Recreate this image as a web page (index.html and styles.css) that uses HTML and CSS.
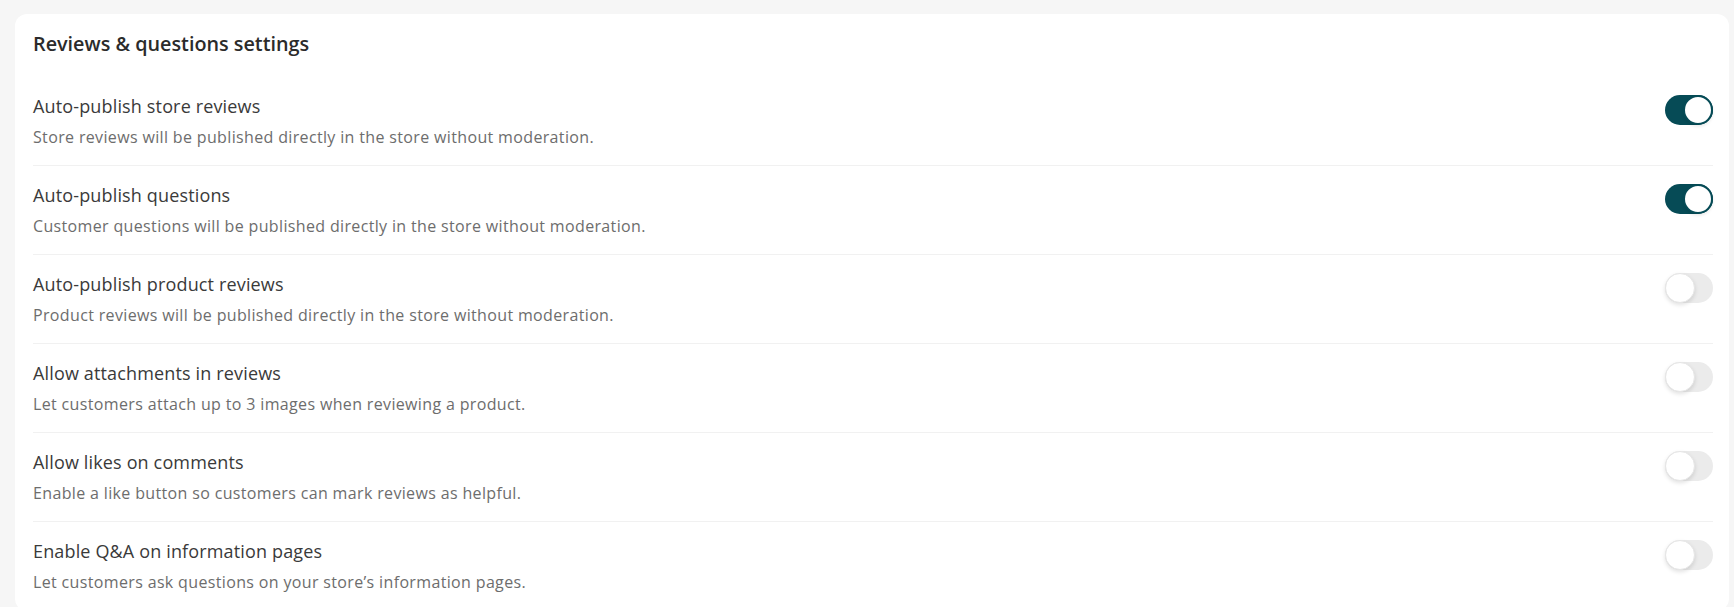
FILE: index.html
```html
<!DOCTYPE html>
<html lang="en">
<head>
<meta charset="utf-8">
<title>Reviews &amp; questions settings</title>
<link rel="stylesheet" href="styles.css">
</head>
<body>
<div class="page">
  <section class="card">
    <h2 class="card-title">Reviews &amp; questions settings</h2>
    <div class="list">
      <div class="row">
        <div class="text">
          <div class="label">Auto-publish store reviews</div>
          <div class="desc">Store reviews will be published directly in the store without moderation.</div>
        </div>
        <span class="toggle on"><span class="knob"></span></span>
      </div>
      <div class="row">
        <div class="text">
          <div class="label">Auto-publish questions</div>
          <div class="desc">Customer questions will be published directly in the store without moderation.</div>
        </div>
        <span class="toggle on"><span class="knob"></span></span>
      </div>
      <div class="row">
        <div class="text">
          <div class="label">Auto-publish product reviews</div>
          <div class="desc">Product reviews will be published directly in the store without moderation.</div>
        </div>
        <span class="toggle"><span class="knob"></span></span>
      </div>
      <div class="row">
        <div class="text">
          <div class="label">Allow attachments in reviews</div>
          <div class="desc">Let customers attach up to 3 images when reviewing a product.</div>
        </div>
        <span class="toggle"><span class="knob"></span></span>
      </div>
      <div class="row">
        <div class="text">
          <div class="label">Allow likes on comments</div>
          <div class="desc">Enable a like button so customers can mark reviews as helpful.</div>
        </div>
        <span class="toggle"><span class="knob"></span></span>
      </div>
      <div class="row">
        <div class="text">
          <div class="label">Enable Q&amp;A on information pages</div>
          <div class="desc">Let customers ask questions on your store’s information pages.</div>
        </div>
        <span class="toggle"><span class="knob"></span></span>
      </div>
    </div>
  </section>
</div>
</body>
</html>
```

FILE: styles.css
```css
html, body {
  margin: 0;
  padding: 0;
  background: #f6f6f6;
  font-family: "Open Sans", "Liberation Sans", sans-serif;
}

.page {
  padding: 14px 5px 0 15px;
  height: 607px;
  box-sizing: border-box;
  overflow: hidden;
}

.card {
  background: #ffffff;
  border-radius: 12px;
  padding: 16px 16px 0 18px;
}

.card-title {
  margin: 0 0 19px;
  font-size: 19.8px;
  line-height: 28px;
  font-weight: 600;
  color: #2b2b2b;
}

.row {
  display: flex;
  justify-content: space-between;
  align-items: flex-start;
  padding: 17px 0 16px;
  border-bottom: 1px solid #f1f1f1;
}

.label {
  font-size: 18px;
  line-height: 24px;
  letter-spacing: 0.15px;
  color: #3a3a3a;
}

.desc {
  margin-top: 7px;
  font-size: 16px;
  line-height: 24px;
  letter-spacing: 0.35px;
  color: #6d6d6d;
}

.toggle {
  position: relative;
  flex: none;
  width: 48px;
  height: 30px;
  margin-top: 1px;
  border-radius: 15px;
  background: #ebebeb;
  box-sizing: border-box;
}

.toggle .knob {
  position: absolute;
  top: 0;
  left: 0;
  width: 30px;
  height: 30px;
  border-radius: 50%;
  background: #ffffff;
  box-sizing: border-box;
  border: 1px solid #e6e6e6;
  box-shadow: 0 2px 4px rgba(0, 0, 0, 0.12);
}

.toggle.on {
  background: #064b56;
}

.toggle.on .knob {
  left: 18px;
  border: 2px solid #064b56;
  box-shadow: 0 2px 3px rgba(0, 0, 0, 0.08);
}
```
